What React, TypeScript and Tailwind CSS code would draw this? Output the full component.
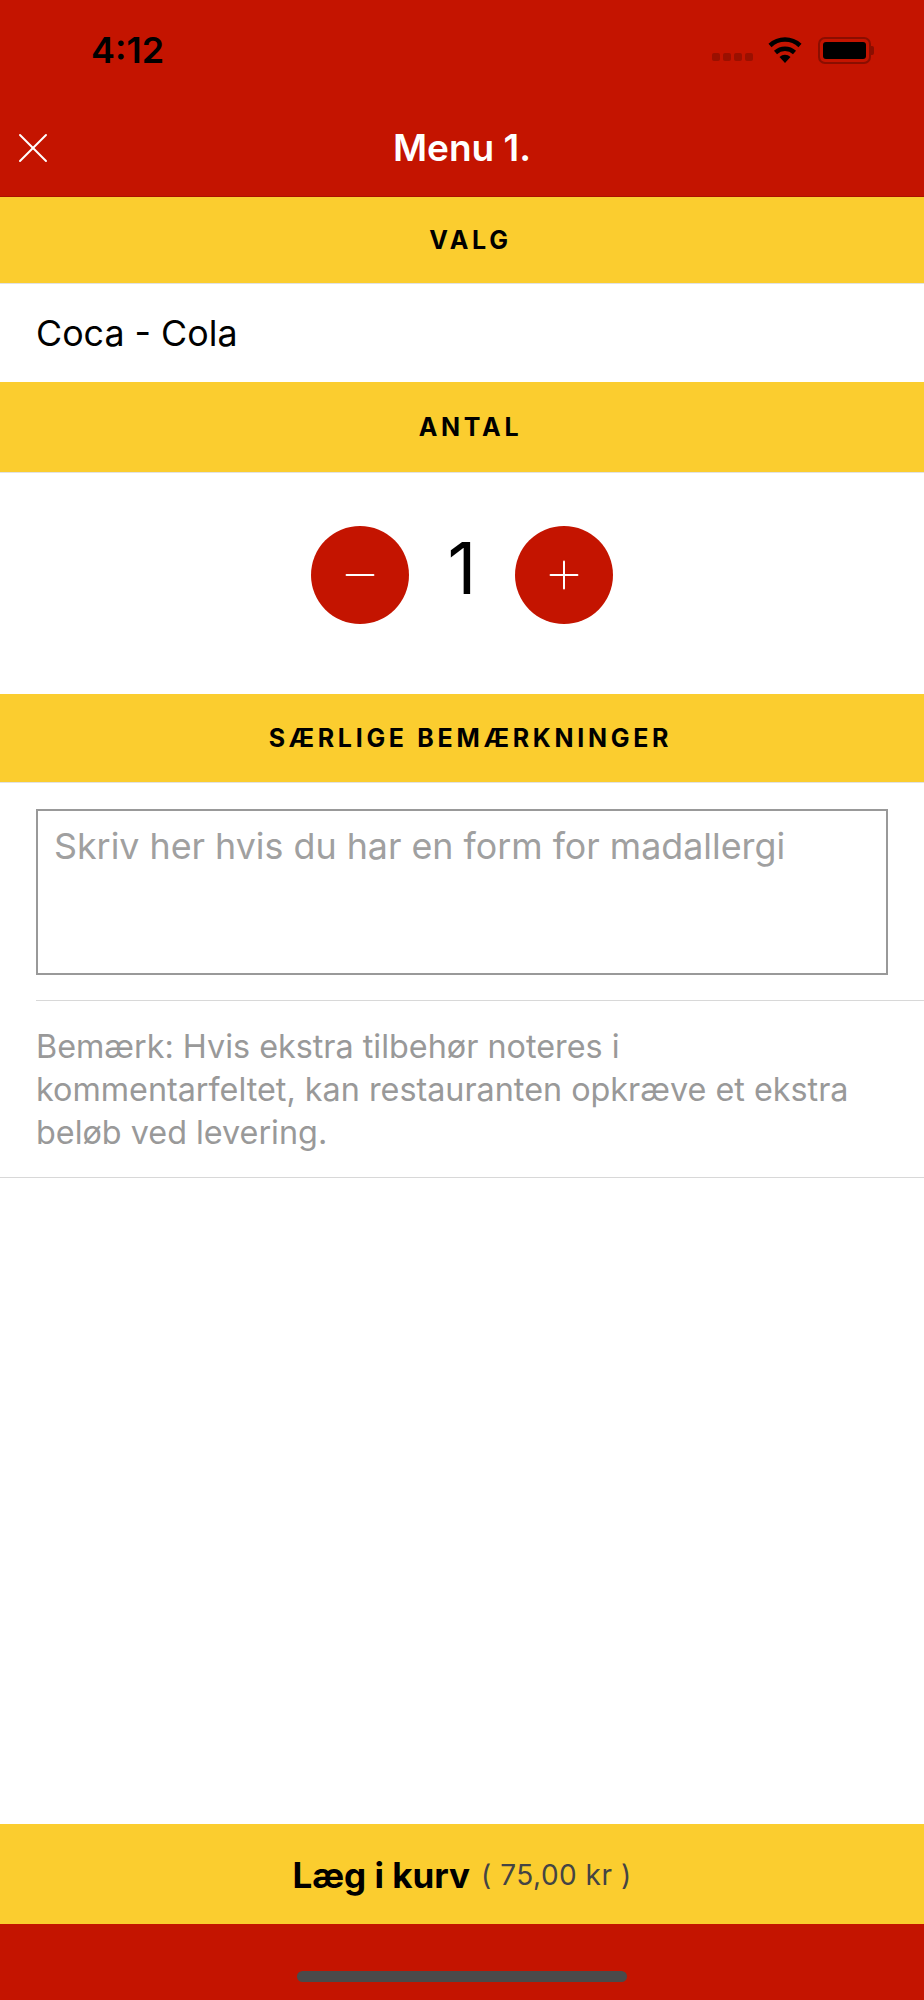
import { Minus, Plus, X } from 'lucide-react'

function SectionBar({ label, height }: { label: string; height: string }) {
  return (
    <div className={`flex items-center justify-center pl-[17px] pt-[2px] bg-[#fbcd2f] border-b border-[#e2e2e2] ${height}`}>
      <span className="text-[25px] font-bold tracking-[3.7px] text-black">{label}</span>
    </div>
  )
}

function StatusIcons() {
  return (
    <div className="flex items-center">
      {/* signal dots */}
      <div className="flex gap-[3px] mt-[13px] mr-[14px]">
        <span className="w-[8px] h-[8px] rounded-[2px] bg-[#9a1000]" />
        <span className="w-[8px] h-[8px] rounded-[2px] bg-[#9a1000]" />
        <span className="w-[8px] h-[8px] rounded-[2px] bg-[#9a1000]" />
        <span className="w-[8px] h-[8px] rounded-[2px] bg-[#9a1000]" />
      </div>
      {/* wifi */}
      <svg width="36" height="28" viewBox="0 0 36 28" className="mr-[15px]">
        <path d="M18 27 L12.5 21 A8 8 0 0 1 23.5 21 Z" fill="#000" />
        <path d="M8.5 16.5 A14 14 0 0 1 27.5 16.5" fill="none" stroke="#000" strokeWidth="4.5" />
        <path d="M3 9.5 A22 22 0 0 1 33 9.5" fill="none" stroke="#000" strokeWidth="4.5" />
      </svg>
      {/* battery */}
      <div className="flex items-center">
        <div className="w-[53px] h-[27px] rounded-[7px] border-2 border-[#8a0e00] p-[3px]">
          <div className="w-full h-full rounded-[3px] bg-black" />
        </div>
        <div className="w-[3px] h-[9px] rounded-r-[2px] bg-[#8a0e00]" />
      </div>
    </div>
  )
}

export default function App() {
  return (
    <div className="w-[924px] h-[2000px] flex flex-col bg-white font-['Inter',sans-serif]">
      {/* Header */}
      <div className="h-[197px] bg-[#c41400] border-b border-[#a81100] flex flex-col">
        <div className="h-[100px] flex items-center justify-between pl-[91px] pr-[50px]">
          <span className="text-[36px] font-semibold text-black">4:12</span>
          <StatusIcons />
        </div>
        <div className="relative flex items-center justify-center h-[96px]">
          <X className="absolute left-[7px] top-[22px] text-white" size={52} strokeWidth={0.9} />
          <span className="text-[37px] font-semibold text-white">Menu 1.</span>
        </div>
      </div>

      <SectionBar label="VALG" height="h-[87px]" />
      <div className="h-[98px] flex items-center pl-[36px] pt-[2px] text-[35.8px] text-black">Coca - Cola</div>

      <SectionBar label="ANTAL" height="h-[91px]" />
      <div className="h-[221px] flex items-center justify-center pb-[18px]">
        <button className="w-[98px] h-[98px] rounded-full bg-[#c41400] flex items-center justify-center">
          <Minus className="text-white" size={46} strokeWidth={1.04} />
        </button>
        <span className="w-[106px] mb-[12px] text-center text-[71px] leading-none text-black">1</span>
        <button className="w-[98px] h-[98px] rounded-full bg-[#c41400] flex items-center justify-center">
          <Plus className="text-white" size={46} strokeWidth={1.04} />
        </button>
      </div>

      <SectionBar label="SÆRLIGE BEMÆRKNINGER" height="h-[89px]" />

      {/* Remarks */}
      <div className="pl-[36px] pt-[26px]">
        <div className="w-[852px] h-[166px] border-2 border-[#999999] px-[16px] pt-[13px] text-[35.8px] leading-[44px] text-[#a0a0a0]">
          Skriv her hvis du har en form for madallergi
        </div>
        <div className="mt-[25px] border-t border-[#d8d8d8]" />
      </div>
      <div className="border-b border-[#d8d8d8] h-[177px] pl-[36px] pt-[24px] text-[32.35px] leading-[43px] text-[#999999]">
        Bemærk: Hvis ekstra tilbehør noteres i<br />
        kommentarfeltet, kan restauranten opkræve et ekstra<br />
        beløb ved levering.
      </div>

      <div className="flex-1" />

      {/* Footer */}
      <div className="h-[100px] bg-[#fbcd2f] flex items-center justify-center pt-[2px]">
        <span className="text-[35px] font-bold text-black">Læg i kurv</span>
        <span className="ml-[11px] text-[28px] tracking-[0.5px] text-[#444444]">( 75,00 kr )</span>
      </div>
      <div className="h-[76px] bg-[#c41400] flex justify-center pt-[47px]">
        <div className="w-[330px] h-[11px] rounded-full bg-[#4a4a4a]" />
      </div>
    </div>
  )
}
